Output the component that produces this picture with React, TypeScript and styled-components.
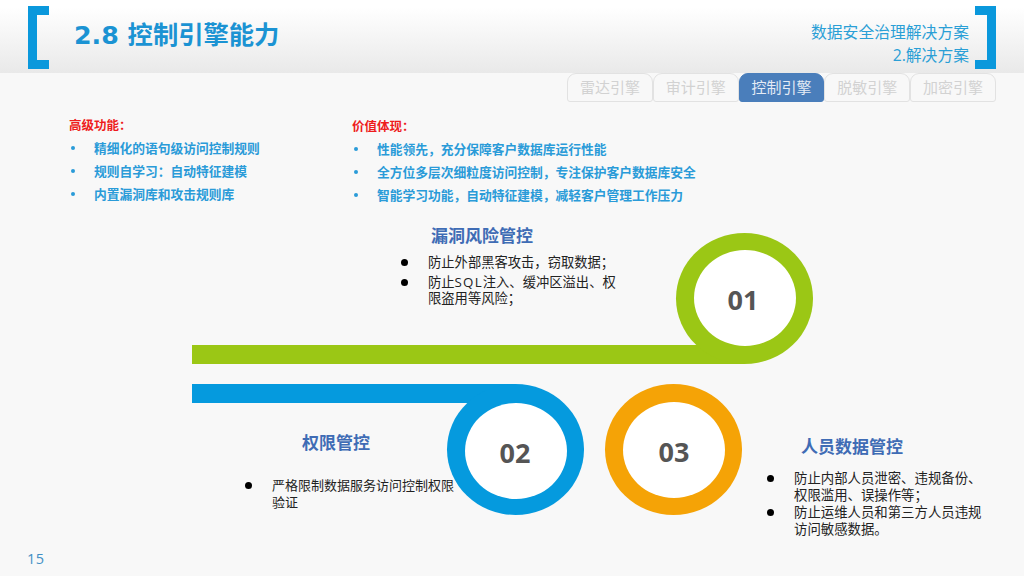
import React, { FC } from 'react';
import styled, { createGlobalStyle } from 'styled-components';

const FONT = `"Open Sans", "Noto Sans CJK SC", sans-serif`;

const TABS = ['雷达引擎', '审计引擎', '控制引擎', '脱敏引擎', '加密引擎'];
const ADVANCED = ['精细化的语句级访问控制规则', '规则自学习：自动特征建模', '内置漏洞库和攻击规则库'];
const VALUE = [
  '性能领先，充分保障客户数据库运行性能',
  '全方位多层次细粒度访问控制，专注保护客户数据库安全',
  '智能学习功能，自动特征建模，减轻客户管理工作压力',
];

const Rings: FC = () => (
  <DiagramArt viewBox="0 210 1024 335">
    <rect x="192" y="345" width="552" height="19" fill="#9bc715" />
    <ellipse cx="744.5" cy="298.5" rx="68.5" ry="65.5" fill="#9bc715" />
    <ellipse cx="745" cy="298" rx="51" ry="48" fill="#fff" />
    <rect x="192" y="384" width="324" height="19" fill="#059ade" />
    <ellipse cx="515.5" cy="449.5" rx="68.5" ry="65.5" fill="#059ade" />
    <ellipse cx="516" cy="451" rx="51" ry="48" fill="#fff" />
    <ellipse cx="673.5" cy="449.5" rx="68.5" ry="65.5" fill="#f5a306" />
    <ellipse cx="674" cy="450" rx="51" ry="48" fill="#fff" />
  </DiagramArt>
);

export default function App() {
  return (
    <Slide>
      <GlobalStyle />
      <Header>
        <TitleGroup>
          <Bracket $side="left" />
          <Title>2.8 控制引擎能力</Title>
        </TitleGroup>
        <SectionGroup>
          <SectionText>
            数据安全治理解决方案
            <br />
            2.解决方案
          </SectionText>
          <Bracket $side="right" />
        </SectionGroup>
      </Header>

      <TabBar>
        {TABS.map((tab) => (
          <Tab key={tab} $active={tab === '控制引擎'}>
            {tab}
          </Tab>
        ))}
      </TabBar>

      <Summary>
        <SummaryColumn $width={283}>
          <SummaryHeading>高级功能：</SummaryHeading>
          {ADVANCED.map((item) => (
            <SummaryItem key={item}>{item}</SummaryItem>
          ))}
        </SummaryColumn>
        <SummaryColumn $offset={1}>
          <SummaryHeading>价值体现：</SummaryHeading>
          {VALUE.map((item) => (
            <SummaryItem key={item} $indent={25}>
              {item}
            </SummaryItem>
          ))}
        </SummaryColumn>
      </Summary>

      <Diagram>
        <Rings />
        <RingNumber $x={743} $y={89}>01</RingNumber>
        <RingNumber $x={515} $y={242}>02</RingNumber>
        <RingNumber $x={674} $y={241}>03</RingNumber>

        <Node $x={400} $y={14}>
          <NodeTitle $indent={31}>漏洞风险管控</NodeTitle>
          <Points $top={6} $gap={3} $size={13.3}>
            <Point>防止外部黑客攻击，窃取数据；</Point>
            <Point>
              防止<Latin>SQL</Latin>注入、缓冲区溢出、权
              <br />
              限盗用等风险；
            </Point>
          </Points>
        </Node>

        <Node $x={244} $y={221}>
          <NodeTitle $indent={58}>权限管控</NodeTitle>
          <Points $top={22} $size={13}>
            <Point>
              严格限制数据服务访问控制权限
              <br />
              验证
            </Point>
          </Points>
        </Node>

        <Node $x={766} $y={225}>
          <NodeTitle $indent={35}>人员数据管控</NodeTitle>
          <Points $top={11} $gap={1} $size={13.4}>
            <Point>
              防止内部人员泄密、违规备份、
              <br />
              权限滥用、误操作等；
            </Point>
            <Point>
              防止运维人员和第三方人员违规
              <br />
              访问敏感数据。
            </Point>
          </Points>
        </Node>
      </Diagram>

      <Footer>15</Footer>
    </Slide>
  );
}

const GlobalStyle = createGlobalStyle`
  html,
  body {
    margin: 0;
    padding: 0;
    background: #f8f8f8;
  }
`;

const Slide = styled.div`
  width: 1024px;
  height: 576px;
  overflow: hidden;
  display: flex;
  flex-direction: column;
  background: #f8f8f8;
  font-family: ${FONT};
`;

const Header = styled.header`
  height: 73px;
  flex: none;
  box-sizing: border-box;
  padding: 6px 28px 4px;
  display: flex;
  justify-content: space-between;
  background: linear-gradient(#ffffff 10%, #e9e9e9);
`;

const TitleGroup = styled.div`
  display: flex;
  gap: 25px;
`;

const SectionGroup = styled.div`
  display: flex;
  gap: 6px;
`;

const Bracket = styled.div<{ $side: 'left' | 'right' }>`
  width: 21px;
  height: 63px;
  box-sizing: border-box;
  border: solid #0a98dc;
  border-width: 9px 0;
  ${({ $side }) => `border-${$side}: 9px solid #0a98dc;`}
`;

const Title = styled.h1`
  margin: 0;
  height: 63px;
  font-family: "DejaVu Sans", "Noto Sans CJK SC", sans-serif;
  font-size: 25.3px;
  font-weight: 700;
  line-height: 59px;
  color: #1b93d3;
`;

const SectionText = styled.div`
  padding-top: 15px;
  font-size: 15.8px;
  line-height: 23px;
  text-align: right;
  color: #2a9fd6;
`;

const TabBar = styled.nav`
  height: 29px;
  flex: none;
  box-sizing: border-box;
  padding-right: 28px;
  display: flex;
  justify-content: flex-end;
`;

const Tab = styled.div<{ $active?: boolean }>`
  width: 85.8px;
  box-sizing: border-box;
  border: 1.5px solid ${({ $active }) => ($active ? '#4a7ebb' : '#e2e2e2')};
  border-radius: 9px 9px 3px 3px;
  background: ${({ $active }) => ($active ? '#4a7ebb' : '#f8f8f8')};
  font-size: 15px;
  line-height: 26px;
  text-align: center;
  color: ${({ $active }) => ($active ? '#e4ebf5' : '#d2d2d2')};
`;

const Summary = styled.section`
  height: 108px;
  flex: none;
  box-sizing: border-box;
  padding: 12px 0 0 69px;
  display: flex;
`;

const SummaryColumn = styled.div<{ $width?: number; $offset?: number }>`
  ${({ $width }) => ($width ? `width: ${$width}px;` : '')}
  margin-top: ${({ $offset }) => $offset ?? 0}px;
`;

const SummaryHeading = styled.div`
  font-size: 12.5px;
  font-weight: 700;
  line-height: 23px;
  color: #ee1c1c;
`;

const SummaryItem = styled.div<{ $indent?: number }>`
  display: flex;
  font-size: 12.75px;
  font-weight: 700;
  line-height: 23px;
  color: #2a9bd8;
  white-space: nowrap;

  &::before {
    content: '';
    width: 4px;
    height: 4px;
    flex: none;
    margin: 9px ${({ $indent }) => ($indent ?? 25) - 6}px 0 2px;
    border-radius: 50%;
    background: #2a9bd8;
  }
`;

const Diagram = styled.section`
  position: relative;
  height: 335px;
  flex: none;
`;

const DiagramArt = styled.svg`
  display: block;
  width: 1024px;
  height: 335px;
`;

const RingNumber = styled.div<{ $x: number; $y: number }>`
  position: absolute;
  left: ${({ $x }) => $x}px;
  top: ${({ $y }) => $y}px;
  transform: translate(-50%, -50%);
  font-size: 27px;
  font-weight: 700;
  line-height: 1;
  color: #555;
`;

const Node = styled.div<{ $x: number; $y: number }>`
  position: absolute;
  left: ${({ $x }) => $x}px;
  top: ${({ $y }) => $y}px;
`;

const NodeTitle = styled.h2<{ $indent: number }>`
  margin: 0 0 0 ${({ $indent }) => $indent}px;
  font-size: 17px;
  font-weight: 700;
  line-height: 24px;
  color: #3f6cb5;
`;

const Points = styled.ul<{ $top: number; $gap?: number; $size: number }>`
  margin: ${({ $top }) => $top}px 0 0;
  padding: 0;
  list-style: none;
  display: flex;
  flex-direction: column;
  gap: ${({ $gap }) => $gap ?? 0}px;
  font-size: ${({ $size }) => $size}px;
`;

const Point = styled.li`
  position: relative;
  padding-left: 28px;
  line-height: 16.5px;
  color: #222;
  white-space: nowrap;

  &::before {
    content: '';
    position: absolute;
    left: 1px;
    top: 5px;
    width: 7px;
    height: 7px;
    border-radius: 50%;
    background: #000;
  }
`;

const Latin = styled.span`
  letter-spacing: 1.2px;
`;

const Footer = styled.footer`
  flex: 1;
  padding-left: 27px;
  font-size: 14.5px;
  line-height: 28px;
  letter-spacing: 0.5px;
  color: #3f8fc5;
`;
